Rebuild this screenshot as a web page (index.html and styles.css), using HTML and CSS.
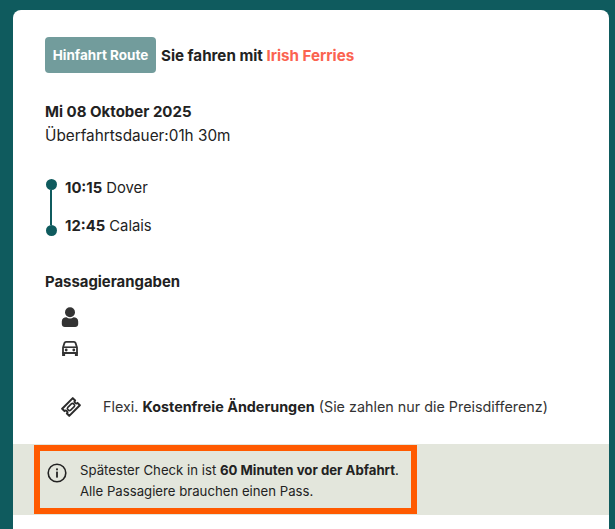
FILE: index.html
```html
<!DOCTYPE html>
<html lang="de">
<head>
<meta charset="utf-8">
<title>Hinfahrt Route</title>
<link rel="stylesheet" href="styles.css">
</head>
<body>
<main class="card">
  <section class="content">
    <div class="route-head">
      <span class="badge">Hinfahrt Route</span>
      <span class="operator">Sie fahren mit <span class="ferry">Irish Ferries</span></span>
    </div>
    <div class="date">Mi 08 Oktober 2025</div>
    <div class="duration">Überfahrtsdauer:01h 30m</div>
    <div class="timeline">
      <div class="track"><i class="dot"></i><i class="line"></i><i class="dot"></i></div>
      <div class="stops">
        <div><b>10:15</b> Dover</div>
        <div><b>12:45</b> Calais</div>
      </div>
    </div>
    <h2 class="pax-title">Passagierangaben</h2>
    <div class="pax-icons">
      <svg class="icon" viewBox="0 0 18 20" width="18" height="20"><circle cx="9" cy="5.200" r="5"/><path d="M0.800 17v-2.600C0.800 11.600 3 10.200 5.500 10.200c1 .8 2.200 1.200 3.500 1.200s2.500-.4 3.500-1.200c2.500 0 4.700 1.400 4.700 4.200V17c0 1.700-1.300 3-3 3H3.800c-1.700 0-3-1.300-3-3z"/></svg>
      <svg class="icon" viewBox="0 0 18 16" width="18" height="16"><path d="M5 1.800h8c.7 0 1.300.4 1.500 1.100L16 7.500V13H2V7.500l1.500-4.600C3.700 2.200 4.300 1.800 5 1.800z" fill="none" stroke="#333" stroke-width="1.800" stroke-linejoin="round"/><path d="M2 7.200h14" stroke="#333" stroke-width="1.600"/><circle cx="5.200" cy="10" r="1.400"/><circle cx="12.800" cy="10" r="1.400"/><rect x="1.100" y="12" width="3" height="4"/><rect x="13.900" y="12" width="3" height="4"/></svg>
    </div>
    <div class="flexi">
      <svg class="ticket" viewBox="0 0 20 20" width="20" height="20"><g transform="rotate(-45 10 10)"><path d="M2.500 5h15v3.300a1.700 1.700 0 0 0 0 3.400V15h-15v-3.300a1.700 1.700 0 0 0 0-3.400z" fill="none" stroke="#2b2b2b" stroke-width="2" stroke-linejoin="round"/><rect x="6" y="8" width="8" height="4" rx="1.500" fill="none" stroke="#2b2b2b" stroke-width="1.600"/></g></svg>
      <span>Flexi. <b>Kostenfreie Änderungen</b> (Sie zahlen nur die Preisdifferenz)</span>
    </div>
  </section>
  <section class="band">
    <div class="notice">
      <svg class="info" viewBox="0 0 20 20" width="20" height="20"><circle cx="10" cy="10" r="8.800" fill="none" stroke="#222" stroke-width="1.600"/><rect x="9.100" y="8.600" width="1.800" height="6" fill="#222"/><rect x="9.100" y="5.400" width="1.800" height="1.900" fill="#222"/></svg>
      <p>Spätester Check in ist <b>60 Minuten vor der Abfahrt</b>.<br>Alle Passagiere brauchen einen Pass.</p>
    </div>
  </section>
</main>
</body>
</html>
```
FILE: styles.css
```css
* { box-sizing: border-box; }
html, body { margin: 0; height: 100%; }
body {
  background: #0f5b5e;
  padding: 10px 6px 0 13px;
  font-family: Inter, "Liberation Sans", sans-serif;
  color: #222;
  overflow: hidden;
}
.card {
  background: #fff;
  border-radius: 8px 8px 0 0;
  height: 519px;
}
.content { padding: 27px 32px 0; height: 434px; }
.route-head { display: flex; align-items: center; gap: 5px; height: 36px; }
.badge {
  background: #729c9c;
  color: #fff;
  font-weight: 700;
  font-size: 13.5px;
  border-radius: 4px;
  height: 36px;
  width: 111px;
  display: flex;
  align-items: center;
  justify-content: center;
}
.operator { font-weight: 700; font-size: 15.15px; }
.ferry { color: #fb6350; }
.date { margin-top: 27px; font-weight: 700; font-size: 15px; line-height: 24px; }
.duration { font-size: 15.3px; line-height: 24px; }
.timeline { display: flex; gap: 8px; margin-top: 31px; }
.track { width: 12px; display: flex; flex-direction: column; align-items: center; }
.dot { width: 11px; height: 11px; border-radius: 50%; background: #0f5b5e; flex: none; }
.line { width: 2px; height: 35px; background: #0f5b5e; }
.stops { font-size: 14.8px; line-height: 38px; margin-top: -10px; }
.pax-title { margin: 25px 0 0; font-size: 14.9px; line-height: 24px; font-weight: 700; }
.pax-icons { display: flex; flex-direction: column; gap: 13px; padding: 13px 0 0 16px; }
.icon { fill: #333; display: block; }
.flexi { display: flex; align-items: center; gap: 22px; margin-top: 41px; padding-left: 16px; font-size: 14.35px; color: #333; line-height: 20px; }
.flexi b { color: #222; }
.band { background: #e3e6dc; height: 71px; padding: 1px 0 0 21px; }
.notice {
  display: flex;
  align-items: center;
  gap: 13px;
  width: 383px;
  height: 69px;
  border: 6px solid #ff5a00;
  padding-left: 7px;
}
.info { align-self: flex-start; margin-top: 12px; }
.notice p { margin: 2px 0 0; font-size: 13.2px; line-height: 21px; }
```
